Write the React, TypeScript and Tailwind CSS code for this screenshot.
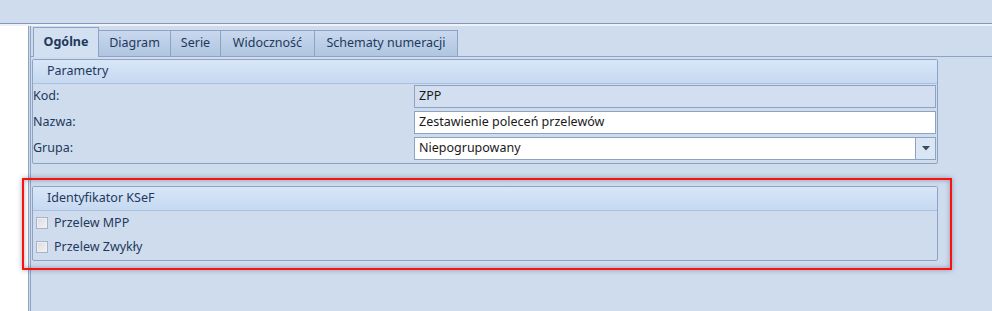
const font = { fontFamily: '"Noto Sans", "Open Sans", sans-serif' };

const TABS = [
  { label: 'Ogólne', w: 'w-[66px]', active: true },
  { label: 'Diagram', w: 'w-[72px]' },
  { label: 'Serie', w: 'w-[50px]' },
  { label: 'Widoczność', w: 'w-[94px]' },
  { label: 'Schematy numeracji', w: 'w-[143px]' },
];

function GroupHeader({ title }: { title: string }) {
  return (
    <div className="h-[24px] flex items-center pl-[14px] text-[12.5px] text-[#1e395b] bg-gradient-to-b from-[#d8e6f8] to-[#c6d9f1] border-b border-[#a9c0de]">
      {title}
    </div>
  );
}

function Checkbox({ label }: { label: string }) {
  return (
    <div className="h-[24px] flex items-center gap-[6px] pl-[3px]">
      <span className="w-[12px] h-[12px] border border-[#a3b4cc] bg-gradient-to-br from-[#dcdcdc] to-[#f4f4f4] shadow-[inset_0_0_0_1px_#f0f0f0]" />
      <span className="text-[12.5px] text-[#1e395b]">{label}</span>
    </div>
  );
}

export default function App() {
  return (
    <div className="relative w-[992px] h-[311px] bg-[#cfdcee] overflow-hidden" style={font}>
      {/* top strip */}
      <div className="h-[24px] border-b border-[#8398b8]" />
      <div className="flex h-[287px] border-t-2 border-[#eef3fa]">
        <div className="w-[28px] bg-white" />
        <div className="flex-1 flex border-l border-[#8ea3c2] pl-[1px]">
          <div className="flex-1 border-l border-[#8ea3c2] pl-[2px] flex flex-col">
            {/* tabs */}
            <div className="h-[30px] flex items-end pt-[2px]">
              {TABS.map((t) =>
                t.active ? (
                  <div
                    key={t.label}
                    className={`${t.w} h-[30px] flex items-center justify-center border border-b-0 border-[#8ea3c2] bg-[#d3e0f1] text-[12.5px] font-bold text-[#1e395b] relative top-[1px]`}
                  >
                    {t.label}
                  </div>
                ) : (
                  <div
                    key={t.label}
                    className={`${t.w} h-[26px] flex items-center justify-center border border-l-0 border-b-0 border-[#8ea3c2] bg-gradient-to-b from-[#c8d8ee] to-[#b0c5e1] text-[12.5px] text-[#1e395b]`}
                  >
                    {t.label}
                  </div>
                )
              )}
            </div>
            {/* panel */}
            <div className="flex-1 border-t border-[#8ea3c2] -ml-[3px] pl-[2px] pt-[2px]">
              <div className="w-[906px] border border-[#8ea3c2] rounded-[2px]">
                <GroupHeader title="Parametry" />
                <div className="flex flex-col gap-[3px] pt-[1px] pb-[3px] pr-[1px]">
                  <div className="flex items-center h-[23px]">
                    <span className="w-[381px] text-[12.5px] text-[#1e395b]">Kod:</span>
                    <div className="flex-1 h-[23px] border border-[#8ea3c2] bg-[#d3dff0] flex items-center pl-[4px] text-[12.5px] text-[#1a1a1a]">
                      ZPP
                    </div>
                  </div>
                  <div className="flex items-center h-[23px]">
                    <span className="w-[381px] text-[12.5px] text-[#1e395b]">Nazwa:</span>
                    <div className="flex-1 h-[23px] border border-[#8ea3c2] bg-white flex items-center pl-[4px] text-[12.5px] text-[#1a1a1a]">
                      Zestawienie poleceń przelewów
                    </div>
                  </div>
                  <div className="flex items-center h-[23px]">
                    <span className="w-[381px] text-[12.5px] text-[#1e395b]">Grupa:</span>
                    <div className="flex-1 h-[23px] border border-[#8ea3c2] bg-white flex items-center text-[12.5px] text-[#1a1a1a]">
                      <span className="flex-1 pl-[4px]">Niepogrupowany</span>
                      <span className="w-[20px] h-full border-l border-[#8ea3c2] bg-[#dbe6f4] flex items-center justify-center">
                        <svg width="8" height="5" viewBox="0 0 8 5">
                          <path d="M0 0h8L4 4.5z" fill="#3b4a5e" />
                        </svg>
                      </span>
                    </div>
                  </div>
                </div>
              </div>

              <div className="w-[906px] mt-[22px] border border-[#8ea3c2] rounded-[2px]">
                <GroupHeader title="Identyfikator KSeF" />
                <div className="pb-[1px]">
                  <Checkbox label="Przelew MPP" />
                  <Checkbox label="Przelew Zwykły" />
                </div>
              </div>
            </div>
          </div>
        </div>
      </div>

      {/* red highlight frame */}
      <div className="absolute left-[22px] top-[178px] w-[930px] h-[92px] border-2 border-[#ff1010] shadow-[0_0_5px_rgba(60,70,90,0.45),inset_0_0_5px_rgba(60,70,90,0.45)]" />
    </div>
  );
}
